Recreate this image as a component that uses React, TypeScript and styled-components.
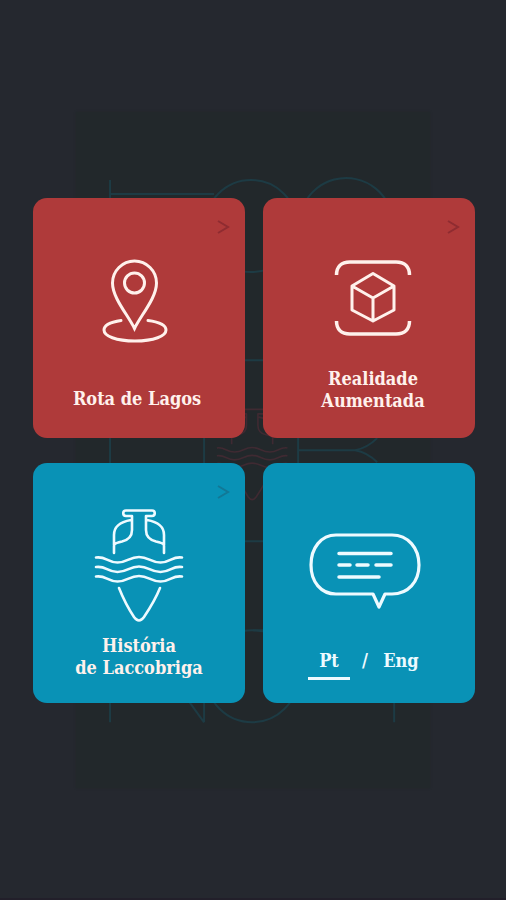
import { Fragment, useState } from "react";
import styled, { createGlobalStyle } from "styled-components";

const GlobalStyle = createGlobalStyle`
  * { box-sizing: border-box; }
  body { margin: 0; background: #25282f; }
`;

const RED = "#af3a3a";
const BLUE = "#0992b6";

const Screen = styled.main`
  display: grid;
  grid-template-columns: minmax(0, 1fr);
  place-items: center;
  min-height: 100vh;
  box-shadow: inset 0 -2px #221f2a;
  background: #25282f;
  font-family: "DejaVu Serif Condensed", "DejaVu Serif", serif;
`;

const Poster = styled.div`
  grid-area: 1 / 1;
  width: 70%;
  background: #22282b;
  box-shadow: 0 0 2px #22282b;

  svg {
    display: block;
    width: 100%;
    height: auto;
  }
`;

const Menu = styled.nav`
  grid-area: 1 / 1;
  z-index: 1;
  display: grid;
  grid-template-columns: repeat(2, minmax(0, 1fr));
  gap: 25px 18px;
  width: 100%;
  max-width: 624px;
  padding: 0 31px 0 33px;
`;

const Tile = styled.div<{ $color: string; $padding: string }>`
  position: relative;
  display: flex;
  flex-direction: column;
  align-items: center;
  justify-content: space-between;
  min-height: 240px;
  padding: ${(p) => p.$padding};
  border-radius: 14px;
  background: ${(p) => p.$color};
  color: #fff1ec;
  text-decoration: none;
`;

const Label = styled.span`
  font-size: 18px;
  font-weight: 700;
  line-height: 22px;
  text-align: center;
  white-space: pre-line;
`;

const Corner = styled.svg<{ $color: string }>`
  position: absolute;
  top: 21px;
  right: 15px;
  stroke: ${(p) => p.$color};
`;

const Languages = styled.div`
  display: flex;
  align-items: flex-start;
  gap: 12px;
  color: #eefaff;
  font-size: 18px;
  font-weight: 700;
  line-height: 22px;
`;

const Language = styled.button<{ $active: boolean }>`
  min-width: 42px;
  padding: 0 0 5px;
  border: 0;
  border-bottom: 3px solid ${(p) => (p.$active ? "#eefaff" : "transparent")};
  background: none;
  color: inherit;
  font: inherit;
  cursor: pointer;
`;

const line = {
  fill: "none",
  strokeLinecap: "round",
  strokeLinejoin: "round",
} as const;

function AmphoraPaths() {
  return (
    <>
      <path d="M31 1.500h26a2.700 2.700 0 0 1 0 5.500h-6v14c0 7 4 10 10 11.500 5 1 7 2 8 3.500M31 1.500a2.700 2.700 0 0 0 0 5.500h6v14c0 7-4 10-10 11.500-5 1-7 2-8 3.500M36 11C25 13 19 17 19 26v18M52 11C63 13 69 17 69 26v18" />
      <path d="M1 48.500c10-1.500 11 5 21.500 5S34 48 44 48s11 5.500 21.500 5.500S77 47 87 48.500M1 58c10-1.500 11 5 21.500 5S34 57.500 44 57.500 55 63 65.500 63 77 56.500 87 58M1 67.500c10-1.500 11 5 21.500 5S34 67 44 67s11 5.500 21.500 5.500S77 66 87 67.500" />
      <path d="M24 79c4 10 9 20 15 29q5 7 10 0c6-9 12-19 16-29" />
    </>
  );
}

function PosterArt() {
  return (
    <svg viewBox="76 112 354 676" aria-hidden="true" {...line} strokeLinecap="butt">
      <g stroke="#1d3b44" strokeWidth="2">
        <path d="M110 180v542M110 194h104" />
        <path d="M204 361v180M204 630v92M110 592l94 130" />
        <circle cx="251" cy="226" r="46" />
        <path d="M388 204a47 47 0 1 0 0 42M205 360h80M205 541h80M253 630h50" />
        <circle cx="252" cy="676" r="46" />
        <path d="M298 361v180M298 450h57M377 438q-10 10-22 12 12 2 22 12M394 630v92" />
      </g>
      <g transform="translate(216 408) scale(.82)" stroke="#3f2a32" strokeWidth="2">
        <AmphoraPaths />
      </g>
    </svg>
  );
}

function Chevron({ color }: { color: string }) {
  return (
    <Corner width="14" height="16" viewBox="0 0 14 16" $color={color} {...line} strokeWidth="2" aria-hidden="true">
      <path d="M2 2l10 6-10 6" strokeLinecap="butt" strokeLinejoin="miter" />
    </Corner>
  );
}

function PinIcon() {
  return (
    <svg width="70" height="84" viewBox="0 0 70 84" {...line} stroke="#fff1ec" strokeWidth="3" aria-hidden="true">
      <path d="M32.500 69.500C26 56 10.500 39 10.500 24a22 22 0 0 1 44 0c0 15-15.500 32-22 45.500z" strokeLinejoin="miter" />
      <circle cx="32.500" cy="24" r="10" />
      <path d="M19 61.500C9 63 2 66 2 71c0 6 12 11 31 11s31-5 31-11c0-5-7-8-18-9.500" />
    </svg>
  );
}

function CubeIcon() {
  return (
    <svg width="78" height="78" viewBox="0 0 78 78" {...line} stroke="#fff1ec" strokeWidth="3" aria-hidden="true">
      <path d="M2.500 16C2.500 8 7 3 16 3h46c9 0 13.500 5 13.500 13M2.500 62c0 8 4.500 13 13.500 13h46c9 0 13.500-5 13.500-13" strokeWidth="3.500" strokeLinecap="butt" />
      <path d="M39 14.500L60 27v24L39 62 18 51V27zM18 27l21 12 21-12M39 39v23" />
    </svg>
  );
}

function AmphoraIcon() {
  return (
    <svg width="90" height="114" viewBox="-1 0 90 114" {...line} stroke="#eefaff" strokeWidth="2.600" aria-hidden="true">
      <AmphoraPaths />
    </svg>
  );
}

function BubbleIcon() {
  return (
    <svg width="112" height="76" viewBox="0 0 112 76" {...line} stroke="#eefaff" strokeWidth="3.200" aria-hidden="true">
      <path d="M27 2h56c16 0 27 13 27 30S99 61 83 61h-7l-6 13-6-13H27C12 61 2 49 2 32S12 2 27 2z" />
      <path d="M30 20.500h52M30 32h11M48 32h11M67 32h15M30 44h40" strokeWidth="3.500" />
    </svg>
  );
}

const tiles = [
  { label: "Rota de Lagos", href: "#rota", color: RED, arrow: "#8f2c31", padding: "61px 14px 28px 10px", Icon: PinIcon },
  { label: "Realidade\nAumentada", href: "#realidade", color: RED, arrow: "#8f2c31", padding: "61px 10px 26px 18px", Icon: CubeIcon },
  { label: "História\nde Laccobriga", href: "#historia", color: BLUE, arrow: "#127896", padding: "46px 12px 24px", Icon: AmphoraIcon },
];

const languages = ["Pt", "Eng"];

export default function App() {
  const [language, setLanguage] = useState("Pt");

  return (
    <>
      <GlobalStyle />
      <Screen>
        <Poster>
          <PosterArt />
        </Poster>
        <Menu aria-label="Menu">
          {tiles.map(({ label, href, color, arrow, padding, Icon }) => (
            <Tile as="a" href={href} key={href} $color={color} $padding={padding}>
              <Chevron color={arrow} />
              <Icon />
              <Label>{label}</Label>
            </Tile>
          ))}
          <Tile $color={BLUE} $padding="70px 14px 23px 6px">
            <BubbleIcon />
            <Languages>
              {languages.map((name, index) => (
                <Fragment key={name}>
                  {index > 0 && <span>/</span>}
                  <Language
                    type="button"
                    $active={language === name}
                    aria-pressed={language === name}
                    onClick={() => setLanguage(name)}
                  >
                    {name}
                  </Language>
                </Fragment>
              ))}
            </Languages>
          </Tile>
        </Menu>
      </Screen>
    </>
  );
}
